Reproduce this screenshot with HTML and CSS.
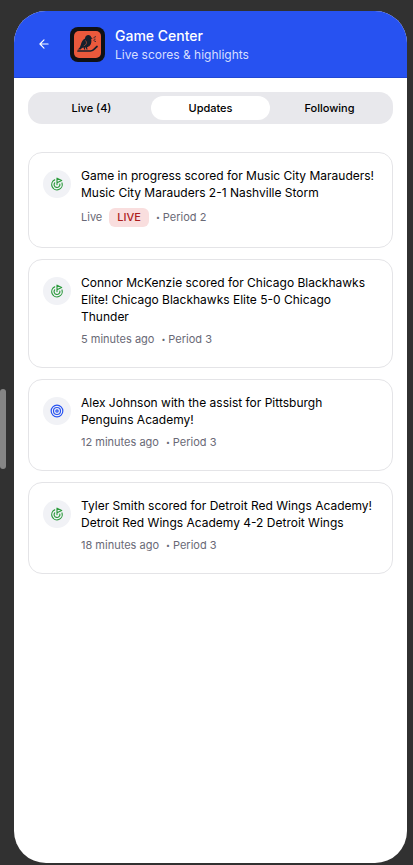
FILE: index.html
```html
<!DOCTYPE html>
<html lang="en">
<head>
<meta charset="utf-8">
<meta name="viewport" content="width=device-width, initial-scale=1">
<title>Game Center</title>
<link rel="stylesheet" href="styles.css">
</head>
<body>
<svg class="sprite" aria-hidden="true">
  <symbol id="goal" viewBox="0 0 24 24"><path d="M12 13V2l8 4-8 4"/><path d="M20.561 10.222a9 9 0 1 1-12.55-5.29"/><path d="M8.002 9.997a5 5 0 1 0 8.9 2.02"/></symbol>
  <symbol id="target" viewBox="0 0 24 24"><circle cx="12" cy="12" r="10"/><circle cx="12" cy="12" r="6"/><circle cx="12" cy="12" r="2"/></symbol>
</svg>
<div class="side-handle"></div>
<div class="screen">
  <header class="header">
    <button class="back" type="button" aria-label="Back">
      <svg class="back-icon" viewBox="0 0 24 24"><path d="m12 19-7-7 7-7M19 12H5"/></svg>
    </button>
    <svg class="logo" viewBox="0 0 35 35" aria-hidden="true">
      <rect width="35" height="35" rx="8" fill="#101114"/>
      <rect x="4" y="4" width="27" height="27" rx="5" fill="#ea593c"/>
      <path fill="#15202c" d="M7.500 22.500c1.500-.8 2.800-2.500 3.300-4.700.6-3 2-5.300 4.200-6.300.1-2 1.500-3.500 3.300-3.500 1.600 0 2.800 1 3 2.400l1.500.9-1.600.7c.5 2.400.2 5-1.300 6.600-.9 1-1.900 1.400-2.900 1.700l.6 2.200h-1.200l-.6-2h-1l.5 2h-1.200l-.5-2c-1.300.2-2.300 1.100-3 2z"/>
      <path fill="none" stroke="#ea593c" stroke-width=".6" d="M15.500 13.500c1.800 2 1 4.300-1.700 5.300"/>
      <path fill="none" stroke="#15202c" stroke-width="1.700" stroke-linecap="round" stroke-linejoin="round" d="M8 24h12.500c2.500 0 3.500-2 6.500-4.500"/>
      <path fill="none" stroke="#15202c" stroke-width=".8" d="m23.500 10.700 2.500-1.200M23.800 12.200h1.700M23.500 13.500l2.500 1.200"/>
    </svg>
    <div class="heading">
      <h1 class="title">Game Center</h1>
      <p class="subtitle">Live scores &amp; highlights</p>
    </div>
  </header>
  <main class="content">
    <nav class="tabs" aria-label="Game views">
      <button class="tab" type="button">Live (4)</button>
      <button class="tab tab-active" type="button">Updates</button>
      <button class="tab" type="button">Following</button>
    </nav>
    <section class="feed">
      <article class="card">
        <span class="badge-icon"><svg class="icon goal"><use href="#goal"/></svg></span>
        <div class="body">
          <p class="message">Game in progress scored for Music City Marauders! Music City Marauders 2-1 Nashville Storm</p>
          <p class="meta"><span>Live</span><span class="live">LIVE</span><span class="period"><span class="dot">•</span>Period 2</span></p>
        </div>
      </article>
      <article class="card">
        <span class="badge-icon"><svg class="icon goal"><use href="#goal"/></svg></span>
        <div class="body">
          <p class="message">Connor McKenzie scored for Chicago Blackhawks Elite! Chicago Blackhawks Elite 5-0 Chicago Thunder</p>
          <p class="meta"><span>5 minutes ago</span><span class="period"><span class="dot">•</span>Period 3</span></p>
        </div>
      </article>
      <article class="card">
        <span class="badge-icon"><svg class="icon assist"><use href="#target"/></svg></span>
        <div class="body">
          <p class="message">Alex Johnson with the assist for Pittsburgh Penguins Academy!</p>
          <p class="meta"><span>12 minutes ago</span><span class="period"><span class="dot">•</span>Period 3</span></p>
        </div>
      </article>
      <article class="card">
        <span class="badge-icon"><svg class="icon goal"><use href="#goal"/></svg></span>
        <div class="body">
          <p class="message">Tyler Smith scored for Detroit Red Wings Academy! Detroit Red Wings Academy 4-2 Detroit Wings</p>
          <p class="meta"><span>18 minutes ago</span><span class="period"><span class="dot">•</span>Period 3</span></p>
        </div>
      </article>
    </section>
  </main>
</div>
</body>
</html>
```
FILE: styles.css
```css
* { box-sizing: border-box; }
body {
  margin: 0;
  min-height: 100vh;
  display: flex;
  padding: 11px 6px 2px 14px;
  background: #313131;
  color: #000;
  font-family: Inter, "Liberation Sans", sans-serif;
}
h1, p { margin: 0; }
button { border: 0; padding: 0; font: inherit; color: inherit; cursor: pointer; }
.sprite { position: absolute; width: 0; height: 0; }
.side-handle {
  position: fixed;
  left: 0;
  top: 45%;
  width: 6px;
  height: 80px;
  border-radius: 3px;
  background: #858585;
}
.screen {
  flex: 1;
  min-width: 0;
  border-radius: 32px;
  overflow: hidden;
  background: #fff;
}
.header {
  display: flex;
  align-items: center;
  padding: 14px;
  background: #2752f1;
  border-bottom: 1px solid #2148d5;
  color: #fff;
}
.back {
  width: 32px;
  height: 32px;
  margin-right: 10px;
  display: grid;
  place-items: center;
  background: transparent;
}
.back-icon {
  width: 14px;
  height: 14px;
  fill: none;
  stroke: currentColor;
  stroke-width: 2;
  stroke-linecap: round;
  stroke-linejoin: round;
}
.logo { width: 35px; height: 35px; margin-right: 10px; }
.heading { padding-top: 1px; }
.title { font-size: 14px; line-height: 20px; font-weight: 500; }
.subtitle { font-size: 12px; line-height: 17px; color: #d6dfff; }
.content { padding: 14px; }
.tabs {
  display: grid;
  grid-template-columns: repeat(3, 1fr);
  padding: 4px;
  border-radius: 14px;
  background: #e8e8ec;
}
.tab {
  height: 24px;
  border-radius: 12px;
  background: transparent;
  font-size: 11px;
  line-height: 16px;
  font-weight: 500;
}
.tab-active { background: #fff; }
.feed { margin-top: 28px; display: grid; gap: 11px; }
.card {
  display: flex;
  gap: 10px;
  padding: 14px 14px 20px;
  border: 1px solid #e4e4e7;
  border-radius: 14px;
}
.badge-icon {
  flex: none;
  width: 28px;
  height: 28px;
  margin-top: 3px;
  display: grid;
  place-items: center;
  border-radius: 50%;
  background: #f1f2f6;
}
.icon {
  width: 14px;
  height: 14px;
  fill: none;
  stroke: currentColor;
  stroke-width: 2;
  stroke-linecap: round;
  stroke-linejoin: round;
}
.goal { color: #2b9a3c; }
.assist { color: #2752f1; }
.body { flex: 1; min-width: 0; }
.message { font-size: 12px; line-height: 17px; }
.meta {
  display: flex;
  align-items: center;
  gap: 7px;
  margin-top: 7px;
  font-size: 11px;
  line-height: 15px;
  color: #696976;
}
.period { display: flex; align-items: center; gap: 3px; }
.dot { font-size: 7px; }
.live {
  padding: 2px 8px;
  border-radius: 6px;
  background: #f9dede;
  color: #ad1c1c;
  font-weight: 500;
}
```
